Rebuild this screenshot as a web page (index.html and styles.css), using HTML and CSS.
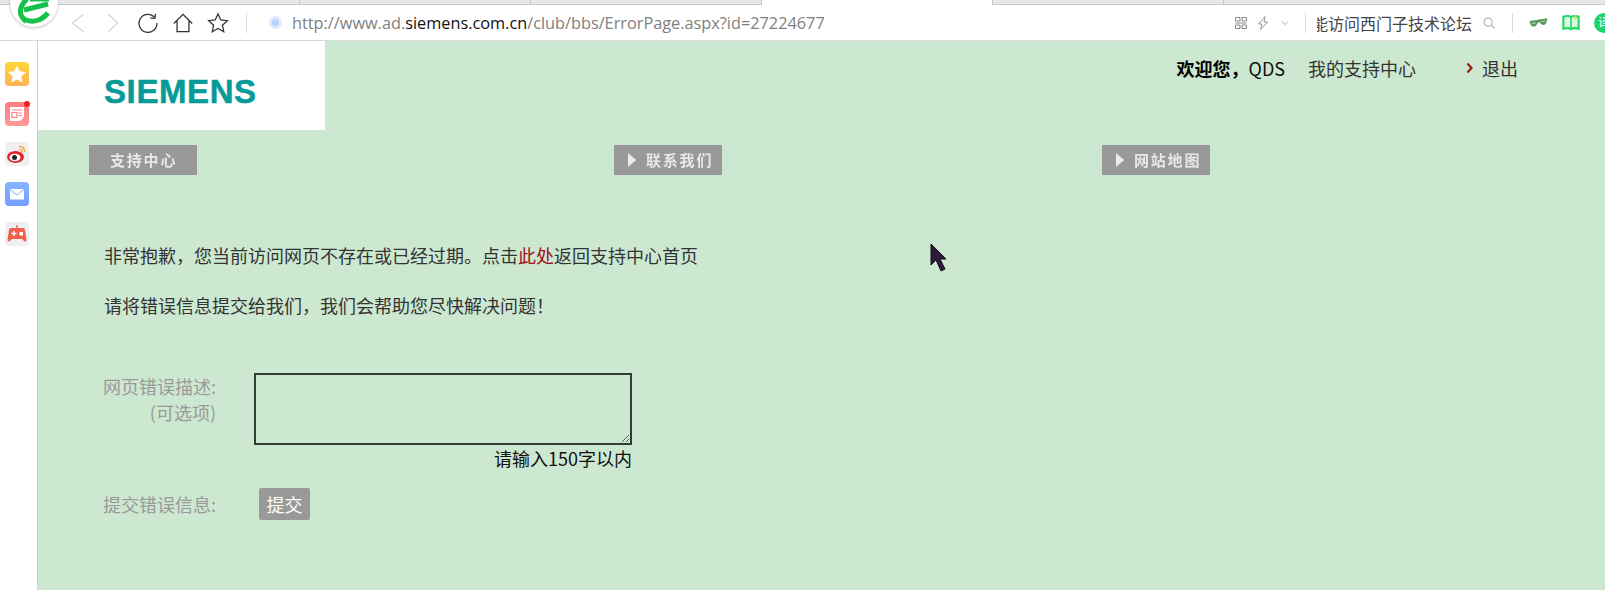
FILE: index.html
```html
<!DOCTYPE html>
<html lang="zh-CN">
<head>
    <meta charset="UTF-8">
    <title>ErrorPage</title>
    <link rel="stylesheet" href="styles.css">
</head>
<body>
    <div class="tabstrip">
        <div class="tab tab-first"></div>
        <div class="tab"></div>
        <div class="tab"></div>
        <div class="tab tab-active"></div>
        <div class="tab"></div>
    </div>

    <div class="toolbar">
        <div class="nav-icons">
            <svg class="ico" viewBox="0 0 24 24"><path d="M18 2.500 6 12l12 9.500" fill="none" stroke="#d4d4d4" stroke-width="1.400"/></svg>
            <svg class="ico" viewBox="0 0 24 24"><path d="m7 2.500 10 9.500-10 9.500" fill="none" stroke="#d4d4d4" stroke-width="1.400"/></svg>
            <svg class="ico" viewBox="0 0 24 24"><path d="M19 5.500A9.800 9.800 0 1 0 21.800 12" fill="none" stroke="#333" stroke-width="1.400"/><path d="m14.500 6.500 5.200.5.300-5" fill="none" stroke="#333" stroke-width="1.400"/></svg>
            <svg class="ico" viewBox="0 0 24 24"><path d="M2 12.500 12 2.500l10 10M5.500 9.500v12h13v-12" fill="none" stroke="#333" stroke-width="1.400"/></svg>
            <svg class="ico" viewBox="0 0 24 24"><path d="m12 2 3 6.700 7.200.8-5.400 4.900 1.500 7.100-6.300-3.600-6.300 3.600 1.500-7.100-5.400-4.900 7.200-.8z" fill="none" stroke="#333" stroke-width="1.400"/></svg>
        </div>
        <div class="divider"></div>
        <div class="url-dot"></div>
        <div class="url">http://www.ad.<span class="url-host">siemens.com.cn</span>/club/bbs/ErrorPage.aspx?id=27224677</div>
        <div class="toolbar-right">
            <svg class="ico-qr" viewBox="0 0 12 12"><path d="M.5.500h4.500v3.500H.5zM7 .5h4.500v3.500H7zM.5 8h4.500v3.500H.5zM7 8h4.500v3.500H7zM.5 6h11" fill="none" stroke="#888"/></svg>
            <svg class="ico-bolt" viewBox="0 0 12 14"><path d="M8 .5 1.500 8H5l-1.500 5.500L10.500 6H7z" fill="none" stroke="#999"/></svg>
            <svg class="ico-chev" viewBox="0 0 10 6"><path d="m1 1 4 4 4-4" fill="none" stroke="#999"/></svg>
            <div class="divider"></div>
            <div class="search-text"><span>能访问西门子技术论坛</span></div>
            <svg class="ico-search" viewBox="0 0 14 14"><circle cx="6" cy="6" r="4.800" fill="none" stroke="#aaa" stroke-width="1.200"/><path d="m9.500 9.500 3.800 3.800" stroke="#aaa" stroke-width="1.200"/></svg>
            <div class="divider"></div>
            <svg class="ico-glasses" viewBox="0 0 20 12"><path d="M.5 4 19.500 1l-1 4c-1 4-5.500 4-7 .5L10 5 8.500 7C7 11 2.500 10.500 1.500 7z" fill="#5a9a5e"/><path d="M3 6.500 7 6M13 4.500l4-.5" stroke="#b4dcb6"/></svg>
            <svg class="ico-book" viewBox="0 0 20 18"><path d="M1.500 2.500C5 1.500 8 1.500 10 3c2-1.500 5-1.500 8.500-.5V16c-3.500-1-6.500-1-8.500.5C8 15 5 15 1.500 16z" fill="#dcf9e2" stroke="#22d964" stroke-width="2.400"/><path d="M10 3v13" stroke="#22d964" stroke-width="1.800"/><path d="M14 1h2v5h-2z" fill="#f2c84b"/></svg>
            <div class="translate">译</div>
        </div>
    </div>

    <div class="browser-logo">
        <svg viewBox="0 0 48 48"><path d="M17 20C9 27 8 37 16 41c8 3 16 0 22-7" fill="none" stroke="#17c24c" stroke-width="5"/><path d="M14 31 38 25" fill="none" stroke="#17c24c" stroke-width="5"/><path d="M20 20h19" stroke="#17c24c" stroke-width="5"/><path d="M9 30c0 6 2 11 6 14" fill="none" stroke="#17c24c" stroke-width="1.500"/></svg>
    </div>

    <div class="viewport">
        <aside class="sidebar">
            <div class="side-btn side-star"><svg viewBox="0 0 24 24"><path d="m12 3.500 2.700 5.700 6.300.8-4.600 4.300 1.200 6.200-5.600-3.100-5.600 3.100 1.200-6.200L3 10l6.300-.8z" fill="#fff"/></svg></div>
            <div class="side-btn side-news">
                <svg viewBox="0 0 24 24"><path d="M5 5h14v10l-4 4H5z" fill="#fff"/><path d="M7 8h10M7 10.500h5v5H7zM13.500 11H17M13.500 13.500H17" stroke="#ff7c80" stroke-width="1.200" fill="none"/></svg>
                <span class="red-dot"></span>
            </div>
            <div class="side-btn side-weibo"><svg viewBox="0 0 24 24"><ellipse cx="10.500" cy="15" rx="8.500" ry="6" fill="#e6262c"/><ellipse cx="10" cy="15.500" rx="5.500" ry="3.800" fill="#fff"/><circle cx="9.500" cy="15.500" r="2.500" fill="#222"/><path d="M14 4.500c3.500-.5 6 2 5.500 5.500M14.500 7.500c1.500-.2 2.500 1 2.300 2.400" fill="none" stroke="#f4a02c" stroke-width="1.500"/></svg></div>
            <div class="side-btn side-mail"><svg viewBox="0 0 24 24"><path d="M5 7h14v10.500H5z" fill="#fff"/><path d="m5 7.500 7 5.500 7-5.500" fill="none" stroke="#a9c6ff" stroke-width="1.200"/></svg></div>
            <div class="side-btn side-game"><svg viewBox="0 0 24 24"><path d="M11.300 3h1.400v3h-1.400zM6 6h12a2 2 0 0 1 2 2l1.500 10c0 1.500-2 2-3 .5L17 17H7l-1.500 1.500c-1 1.500-3 1-3-.5L4 8a2 2 0 0 1 2-2z" fill="#f0604d"/><path d="M6.500 11.500h5M9 9v5" stroke="#fff" stroke-width="1.400"/><rect x="14.500" y="10" width="3.500" height="3.500" fill="#fff"/></svg></div>
        </aside>

        <main class="page">
            <div class="page-head">
                <div class="logo-box"><span class="logo">SIEMENS</span></div>
                <div class="user-bar">
                    <b>欢迎您，</b><span class="user-name">QDS</span>
                    <span class="user-link">我的支持中心</span>
                    <svg class="logout-arrow" viewBox="0 0 8 12"><path d="m1.500 1.500 4 4.500-4 4.500" fill="none" stroke="#9a1a1a" stroke-width="2.200"/></svg>
                    <span>退出</span>
                </div>
            </div>

            <nav class="menu">
                <div class="menu-item menu-plain"><span class="menu-text">支持中心</span></div>
                <div class="menu-item menu-arrow"><span class="menu-text">联系我们</span></div>
                <div class="menu-item menu-arrow"><span class="menu-text">网站地图</span></div>
            </nav>

            <div class="message">
                <p>非常抱歉，您当前访问网页不存在或已经过期。点击<a class="here">此处</a>返回支持中心首页</p>
                <p>请将错误信息提交给我们，我们会帮助您尽快解决问题！</p>
            </div>

            <div class="form-row desc-row">
                <label class="form-label">网页错误描述:<br>(可选项)</label>
                <div class="field">
                    <textarea class="error-text"></textarea>
                    <div class="hint">请输入150字以内</div>
                </div>
            </div>
            <div class="form-row submit-row">
                <label class="form-label">提交错误信息:</label>
                <button class="submit-btn">提交</button>
            </div>

            <svg class="cursor" viewBox="0 0 17 29"><path d="M1 1v21l5-5 5 11 4-2-5-10h6z" fill="#2e1a3a" stroke="#111" stroke-width="1"/></svg>
        </main>
    </div>
</body>
</html>
```

FILE: styles.css
```css
html, body {
    margin: 0;
    height: 590px;
    overflow: hidden;
}

body {
    font-family: "Liberation Sans", "Noto Sans CJK SC", sans-serif;
    background: #fff;
    position: relative;
}

/* tabs */
.tabstrip {
    display: flex;
    height: 5px;
    background: #e8e8e8;
    border-bottom: 1px solid #c8c8c8;
    box-sizing: border-box;
}

.tab {
    box-sizing: border-box;
    width: 231px;
    height: 4px;
    border-right: 1px solid #c8c8c8;
}

.tab-first { width: 300px; }

.tab-active {
    background: #fff;
    height: 5px;
}

/* toolbar */
.toolbar {
    height: 35px;
    display: flex;
    align-items: center;
    background: #fff;
    border-bottom: 1px solid #d8d8d8;
}

.nav-icons {
    display: flex;
    align-items: center;
    gap: 13px;
    margin-left: 67px;
}

.ico {
    width: 22px;
    height: 22px;
}

.divider {
    width: 1px;
    height: 20px;
    background: #d8d8d8;
}

.toolbar > .divider {
    margin-left: 17px;
}

.url-dot {
    width: 7px;
    height: 7px;
    margin-left: 22px;
    border-radius: 50%;
    background: #b6d0ff;
    border: 3px solid #dfe9ff;
}

.url {
    margin-left: 10px;
    font-family: "Open Sans", "Liberation Sans", sans-serif;
    font-size: 16.3px;
    color: #808080;
    white-space: nowrap;
}

.url-host {
    color: #111;
}

.toolbar-right {
    margin-left: auto;
    margin-right: -9px;
    display: flex;
    align-items: center;
    flex: none;
}

.ico-qr {
    width: 12px;
    height: 12px;
    margin-right: 10px;
}

.ico-bolt {
    width: 12px;
    height: 14px;
    margin-right: 12px;
}

.ico-chev {
    width: 8px;
    height: 6px;
    margin-right: 16px;
}

.search-text {
    width: 155px;
    margin-left: 11px;
    overflow: hidden;
    direction: rtl;
    font-family: "Noto Sans CJK SC", sans-serif;
    font-size: 16px;
    color: #444;
    white-space: nowrap;
}

.search-text span {
    direction: ltr;
    unicode-bidi: embed;
}

.ico-search {
    width: 12px;
    height: 12px;
    margin: 0 17px 0 11px;
}

.ico-glasses {
    width: 19px;
    height: 12px;
    margin-left: 16px;
}

.ico-book {
    width: 18px;
    height: 17px;
    margin-left: 14px;
}

.translate {
    width: 20px;
    height: 20px;
    margin-left: 14px;
    border-radius: 50%;
    background: #1fd36a;
    color: #fff;
    font-size: 12px;
    line-height: 20px;
    text-align: center;
}

/* logo circle over the tabs */
.browser-logo {
    position: absolute;
    left: 10px;
    top: -21px;
    width: 48px;
    height: 48px;
    border-radius: 50%;
    background: #fff;
    box-shadow: 0 1px 3px rgba(0, 0, 0, 0.25);
}

.browser-logo svg {
    display: block;
    width: 48px;
    height: 48px;
}

/* content */
.viewport {
    display: flex;
    height: 550px;
}

.sidebar {
    width: 38px;
    flex: none;
    background: #fff;
    border-right: 1px solid #d0d0d0;
    display: flex;
    flex-direction: column;
    gap: 16px;
    padding: 21px 0 0 5px;
    box-sizing: border-box;
}

.side-btn {
    width: 24px;
    height: 24px;
    border-radius: 4px;
    position: relative;
}

.side-btn svg {
    display: block;
    width: 24px;
    height: 24px;
}

.side-star { background: linear-gradient(#ffd63a, #ffb255); }
.side-news { background: linear-gradient(#ff7c80, #ff9a9c); }
.side-weibo { background: #f0f0f0; }
.side-mail { background: linear-gradient(#8ab4ff, #6f9fff); }
.side-game { background: #f0f0f0; }

.red-dot {
    position: absolute;
    top: -1px;
    right: -1px;
    width: 6px;
    height: 6px;
    border-radius: 50%;
    background: #f02020;
}

.page {
    flex: 1;
    position: relative;
    background: #cde8d0;
    font-family: "Noto Sans CJK SC", sans-serif;
    font-size: 18px;
    color: #333;
}

.page-head {
    display: flex;
    justify-content: space-between;
    height: 89px;
}

.logo-box {
    width: 287px;
    background: #fff;
    box-sizing: border-box;
    padding: 38px 0 0 66px;
}

.logo {
    display: block;
    font-family: "Liberation Sans", sans-serif;
    font-weight: bold;
    font-size: 33px;
    line-height: 26px;
    color: #069a98;
    -webkit-text-stroke: 0.5px #069a98;
    letter-spacing: 0.6px;
}

.user-bar {
    display: flex;
    align-items: center;
    height: 20px;
    margin: 17px 87px 0 0;
    color: #333;
    line-height: 20px;
}

.user-bar b {
    color: #000;
}

.user-name {
    color: #111;
}

.user-link {
    margin-left: 23px;
}

.logout-arrow {
    width: 8px;
    height: 12px;
    margin: 0 8px 0 50px;
}

.menu {
    display: flex;
    margin: 15px 0 0 51px;
}

.menu-item {
    box-sizing: border-box;
    width: 108px;
    height: 30px;
    background: #999;
    position: relative;
}

.menu-text {
    display: block;
    color: #e8e8e8;
    font-size: 15px;
    font-weight: bold;
    line-height: 30px;
    letter-spacing: 1.800px;
    filter: blur(0.4px);
}

.menu-plain {
    margin-right: 417px;
    padding-left: 21px;
}

.menu-arrow {
    margin-right: 380px;
    padding-left: 32px;
}

.menu-arrow::before {
    content: "";
    position: absolute;
    left: 14px;
    top: 8px;
    border-left: 8px solid #eee;
    border-top: 7px solid transparent;
    border-bottom: 7px solid transparent;
}

.message {
    margin: 68px 0 0 66px;
    line-height: 24px;
}

.message p {
    margin: 0 0 26px;
}

.here {
    color: #a01020;
}

.form-row {
    display: flex;
    margin-left: 62px;
}

.desc-row {
    margin-top: 56px;
}

.form-label {
    width: 116px;
    text-align: right;
    color: #999;
    line-height: 26px;
    white-space: nowrap;
}

.field {
    margin-left: 38px;
    width: 378px;
}

.error-text {
    display: block;
    box-sizing: border-box;
    width: 378px;
    height: 72px;
    margin: 0;
    background: transparent;
    border: 2px solid #2f3d33;
}

.hint {
    text-align: right;
    color: #111;
    line-height: 26px;
}

.submit-row {
    margin-top: 17px;
    align-items: center;
}

.submit-btn {
    width: 51px;
    height: 32px;
    margin-left: 43px;
    padding: 0;
    border: 0;
    border-radius: 2px;
    background: #999;
    color: #fff;
    font-family: inherit;
    font-size: 18px;
}

.cursor {
    position: absolute;
    left: 892px;
    top: 202px;
    width: 17px;
    height: 29px;
}
```
